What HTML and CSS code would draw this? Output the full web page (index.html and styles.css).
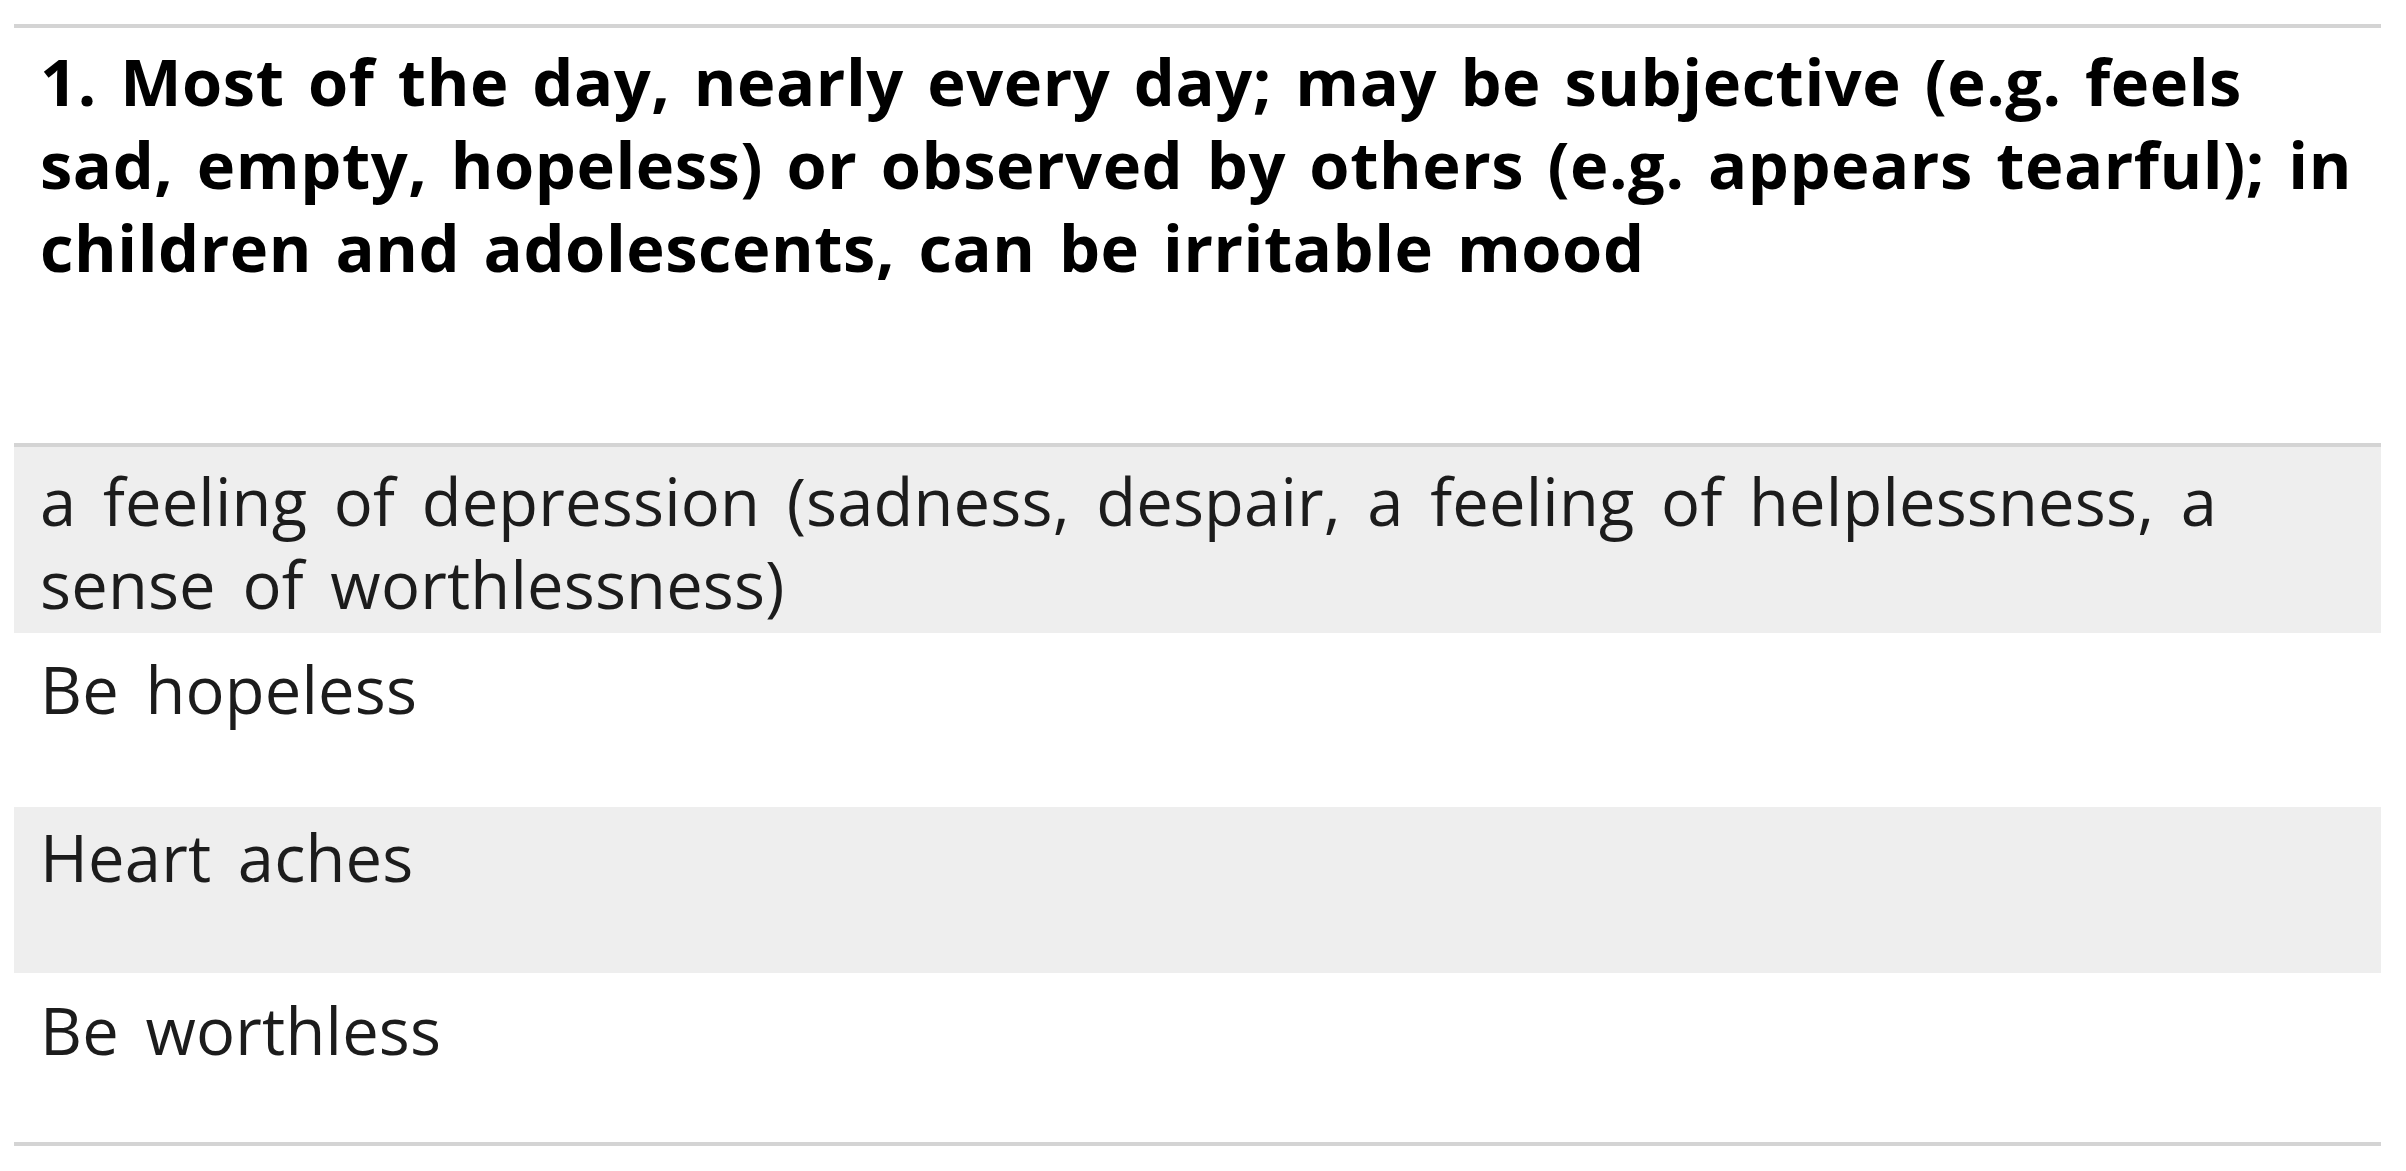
FILE: index.html
```html
<!DOCTYPE html>
<html lang="en">
<head>
<meta charset="utf-8">
<title>Criteria</title>
<link rel="stylesheet" href="styles.css">
</head>
<body>
<div class="page">
  <section class="criteria">
    <div class="head-cell">1. Most of the day, nearly every day; may be subjective (e.g. feels sad, empty, hopeless) or observed by others (e.g. appears tearful); in children and adolescents, can be irritable mood</div>
    <div class="row row-odd row-1">a feeling of depression (sadness, despair, a feeling of helplessness, a sense of worthlessness)</div>
    <div class="row row-even row-2">Be hopeless</div>
    <div class="row row-odd row-3">Heart aches</div>
    <div class="row row-even row-4">Be worthless</div>
  </section>
</div>
</body>
</html>
```

FILE: styles.css
```css
html, body {
  margin: 0;
  padding: 0;
  background: #ffffff;
}

.page {
  padding: 24px 25px 0 14px;
}

.criteria {
  display: flex;
  flex-direction: column;
  font-family: "Open Sans", "Noto Sans", "Liberation Sans", sans-serif;
  color: #1c1c1c;
  font-size: 65px;
  line-height: 83px;
  border-top: 4px solid #d4d4d4;
  border-bottom: 4px solid #d4d4d4;
}

.head-cell {
  height: 419px;
  box-sizing: border-box;
  padding: 12px 10px 0 26px;
  font-weight: 700;
  color: #000;
  letter-spacing: 0.55px;
  word-spacing: 6px;
  border-bottom: 4px solid #d4d4d4;
}

.row {
  box-sizing: border-box;
  padding: 13px 10px 0 26px;
  font-weight: 400;
  letter-spacing: 0.2px;
  word-spacing: 9.5px;
}

.row-odd { background: #eeeeee; }
.row-even { background: #ffffff; }

.row-1 { height: 186px; }
.row-2 { height: 174px; padding-top: 15px; }
.row-3 { height: 166px; padding-top: 9px; }
.row-4 { height: 169px; padding-top: 16px; }
```
